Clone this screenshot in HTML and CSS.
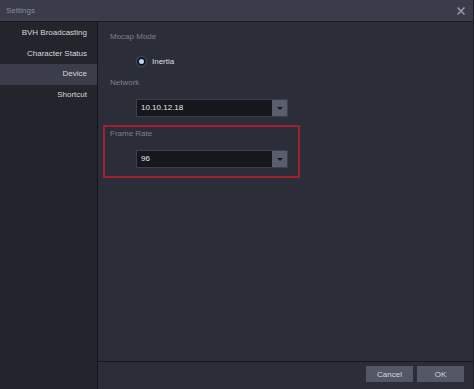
FILE: index.html
```html
<!DOCTYPE html>
<html lang="en">
<head>
    <meta charset="UTF-8">
    <title>Settings</title>
    <link rel="stylesheet" href="styles.css">
</head>
<body>
    <div class="window">
        <header class="titlebar">
            <span class="title">Settings</span>
            <svg class="close" width="8" height="8" viewBox="0 0 8 8">
                <path d="M0.5 0.5 L7.5 7.5 M7.5 0.5 L0.5 7.5" stroke="#9a9da6" stroke-width="1.5"/>
            </svg>
        </header>

        <div class="body">
            <nav class="sidebar">
                <div class="nav-item">BVH Broadcasting</div>
                <div class="nav-item">Character Status</div>
                <div class="nav-item active">Device</div>
                <div class="nav-item">Shortcut</div>
            </nav>

            <main class="main">
                <section class="content">
                    <div class="label">Mocap Mode</div>
                    <label class="radio-row">
                        <span class="radio"></span>
                        <span>Inertia</span>
                    </label>

                    <div class="label">Network</div>
                    <div class="select">
                        <span class="value">10.10.12.18</span>
                        <span class="arrow"></span>
                    </div>

                    <div class="group">
                        <div class="label">Frame Rate</div>
                        <div class="select">
                            <span class="value">96</span>
                            <span class="arrow"></span>
                        </div>
                    </div>
                </section>

                <footer class="footer">
                    <button class="btn">Cancel</button>
                    <button class="btn">OK</button>
                </footer>
            </main>
        </div>
    </div>
</body>
</html>
```

FILE: styles.css
```css
body {
    margin: 0;
    padding: 0;
    font-family: "Liberation Sans", Arial, sans-serif;
    font-size: 8px;
    background-color: #2b2e38;
}

.window {
    width: 474px;
    height: 389px;
    display: flex;
    flex-direction: column;
    box-sizing: border-box;
    border-right: 1px solid #1c1e24;
}

.titlebar {
    height: 22px;
    flex: none;
    box-sizing: border-box;
    display: flex;
    align-items: center;
    justify-content: space-between;
    padding: 0 8px 0 6px;
    background-color: #3a3d49;
    border-bottom: 1px solid #191b20;
    color: #8a8d97;
}

.body {
    flex: 1;
    display: flex;
    min-height: 0;
}

.sidebar {
    width: 97px;
    flex: none;
    background-color: #22252b;
    border-right: 1px solid #121418;
    padding-top: 1px;
}

.nav-item {
    height: 20.5px;
    line-height: 20px;
    text-align: right;
    padding-right: 10px;
    white-space: nowrap;
    color: #d6d8dc;
}

.nav-item.active {
    background-color: #3b3e4a;
}

.main {
    flex: 1;
    display: flex;
    flex-direction: column;
}

.content {
    flex: 1;
    padding: 8px 0 0 12px;
}

.label {
    color: #7d808a;
    line-height: 13px;
}

.radio-row {
    display: flex;
    align-items: center;
    gap: 6px;
    margin: 11px 0 8px 27px;
    height: 14px;
    color: #dcdee2;
}

.radio {
    width: 5px;
    height: 5px;
    border-radius: 50%;
    background-color: #b9d4ec;
    border: 2px solid #15171c;
    box-shadow: 0 0 0 1px #3d4f63;
}

.select {
    width: 152px;
    height: 18px;
    box-sizing: border-box;
    display: flex;
    margin: 10px 0 0 26px;
    background-color: #15171c;
    border: 1px solid #3e414c;
}

.select .value {
    flex: 1;
    padding-left: 4px;
    line-height: 16px;
    color: #e4e6ea;
}

.select .arrow {
    width: 15px;
    background-color: #5a5e6c;
    display: flex;
    align-items: center;
    justify-content: center;
}

.select .arrow::after {
    content: "";
    border-left: 3px solid transparent;
    border-right: 3px solid transparent;
    border-top: 3px solid #15171c;
}

.group {
    width: 197px;
    height: 53px;
    box-sizing: border-box;
    margin: 8px 0 0 -7px;
    padding: 0 0 0 5px;
    border: 2px solid #a51e2e;
}

.group .select {
    margin-top: 10px;
    margin-left: 26px;
}

.footer {
    height: 28px;
    flex: none;
    box-sizing: border-box;
    border-top: 1px solid #15171b;
    display: flex;
    justify-content: flex-end;
    align-items: flex-start;
    gap: 4px;
    padding: 4px 9px 0 0;
}

.btn {
    width: 47px;
    height: 16px;
    padding: 0;
    border: none;
    background-color: #545866;
    color: #d4d6da;
    font-family: inherit;
    font-size: 8px;
}
```
